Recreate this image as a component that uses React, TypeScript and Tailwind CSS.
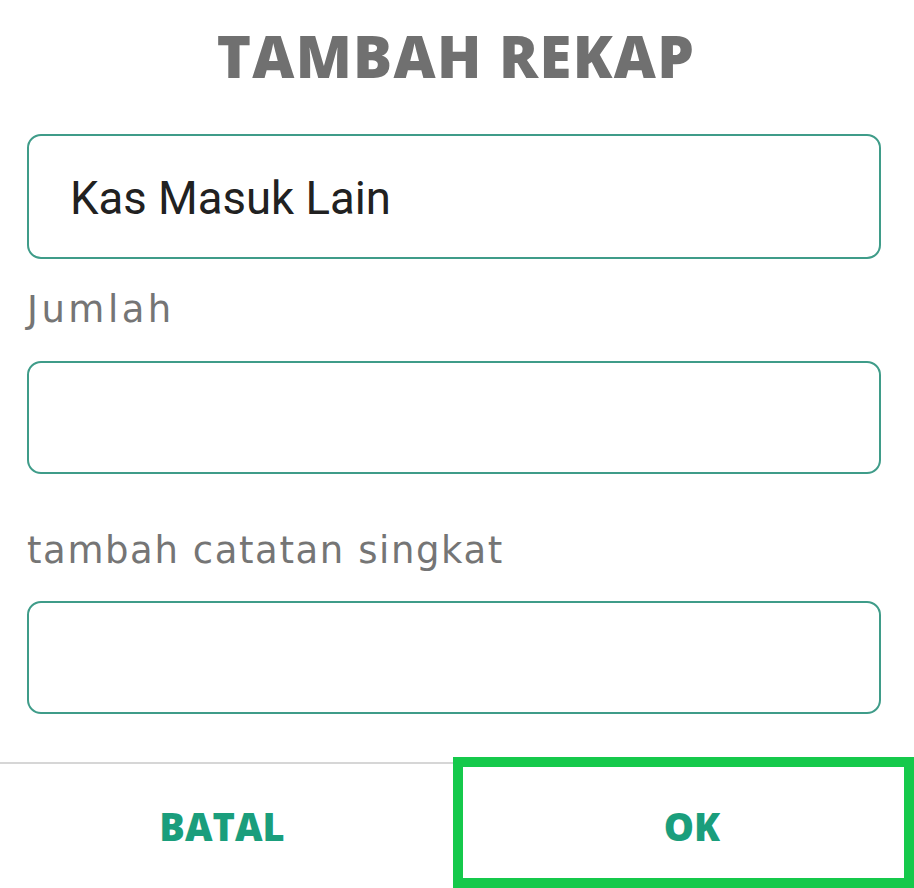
import React from "react";

export default function App() {
  return (
    <div className="w-[914px] h-[888px] bg-white flex flex-col overflow-hidden relative">
      <div className="flex flex-col pl-[27px] pr-[33px]">
        <div className="h-[118px] flex items-center justify-center pb-[6px] pl-[4px]">
          <h1
            className="text-[58px] leading-none font-extrabold text-[#707070] tracking-[1.3px]"
            style={{ fontFamily: '"Open Sans", sans-serif' }}
          >
            TAMBAH REKAP
          </h1>
        </div>
        <div className="mt-[16px] h-[125px] rounded-[14px] border-2 border-[#3f9c89] flex items-center pl-[41px] pt-[4px]">
          <span
            className="text-[45.5px] text-[#212121] leading-none"
            style={{ fontFamily: 'Roboto, sans-serif' }}
          >
            Kas Masuk Lain
          </span>
        </div>
        <div
          className="h-[102px] flex items-center text-[37px] tracking-[3.5px] text-[#757575] leading-none pb-[2px]"
          style={{ fontFamily: '"DejaVu Sans", sans-serif' }}
        >
          Jumlah
        </div>
        <div className="h-[113px] rounded-[14px] border-2 border-[#3f9c89]" />
        <div
          className="h-[127px] flex items-center text-[37px] tracking-[1.6px] text-[#757575] leading-none pt-[25px]"
          style={{ fontFamily: '"DejaVu Sans", sans-serif' }}
        >
          tambah catatan singkat
        </div>
        <div className="h-[113px] rounded-[14px] border-2 border-[#3f9c89]" />
      </div>
      <div className="mt-[48px] border-t-2 border-[#d6d6d6] flex h-[126px]">
        <div
          className="flex-1 flex items-center justify-center pr-[22px] text-[38px] font-extrabold text-[#1a9e7c]"
          style={{ fontFamily: '"Open Sans", sans-serif' }}
        >
          BATAL
        </div>
        <div
          className="flex-1 flex items-center justify-center pl-[4px] text-[38px] font-extrabold text-[#1a9e7c]"
          style={{ fontFamily: '"Open Sans", sans-serif' }}
        >
          OK
        </div>
      </div>
      <div className="absolute left-[453px] top-[757px] w-[461px] h-[131px] border-[10px] border-[#15c94b]" />
    </div>
  );
}
